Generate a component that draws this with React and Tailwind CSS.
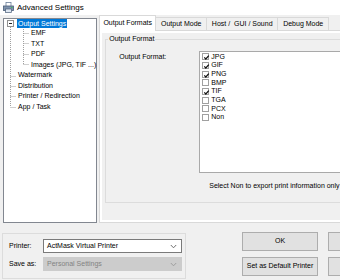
import React from 'react';

const font = { fontFamily: '"Liberation Sans", Arial, sans-serif' };

const treeRows = [
    { label: 'Output Settings', indent: 14, selected: true, first: true },
    { label: 'EMF', indent: 27 },
    { label: 'TXT', indent: 27 },
    { label: 'PDF', indent: 27 },
    { label: 'Images (JPG, TIF ...)', indent: 27 },
    { label: 'Watermark', indent: 14 },
    { label: 'Distribution', indent: 14 },
    { label: 'Printer / Redirection', indent: 14 },
    { label: 'App / Task', indent: 14 },
];

const tabs = [
    { label: 'Output Formats', w: 'w-[57px]', active: true },
    { label: 'Output Mode', w: 'w-[51px]' },
    { label: 'Host /  GUI / Sound', w: 'w-[71px]' },
    { label: 'Debug Mode', w: 'w-[51px]' },
];

const formats = [
    ['JPG', true],
    ['GIF', true],
    ['PNG', true],
    ['BMP', false],
    ['TIF', true],
    ['TGA', false],
    ['PCX', false],
    ['Non', false],
];

function PrinterIcon() {
    return (
        <svg width="11" height="11" viewBox="0 0 11 11">
            <rect x="3" y="0.5" width="5" height="4" fill="#ffffff" stroke="#6b7f99" strokeWidth="0.8" />
            <rect x="0.5" y="4" width="10" height="4.5" fill="#7f93ad" stroke="#4a5d78" strokeWidth="0.8" />
            <rect x="2.5" y="7" width="6" height="3.5" fill="#dfe8f3" stroke="#4a5d78" strokeWidth="0.7" />
            <rect x="8" y="5" width="1.5" height="1" fill="#3fbf5a" />
        </svg>
    );
}

function Check() {
    return (
        <svg width="7" height="7" viewBox="0 0 7 7" className="absolute left-0 top-0">
            <path d="M1.3 3.4 L2.8 5 L5.8 1.6" fill="none" stroke="#111" strokeWidth="1.2" />
        </svg>
    );
}

function Chevron({ color }) {
    return (
        <svg width="7" height="5" viewBox="0 0 7 5">
            <path d="M0.8 1 L3.5 3.8 L6.2 1" fill="none" stroke={color} strokeWidth="0.9" />
        </svg>
    );
}

function Tree() {
    return (
        <div className="relative mt-[3px] ml-[3px] w-[97px] h-[205px] border border-[#828790] bg-white">
            <svg className="absolute left-0 top-0" width="95" height="203">
                <g stroke="#a0a0a0" strokeWidth="1" strokeDasharray="1 1" fill="none">
                    <path d="M6.5 8 V88" />
                    <path d="M6.5 57.5 H12" />
                    <path d="M6.5 67.5 H12" />
                    <path d="M6.5 77.5 H12" />
                    <path d="M6.5 88.5 H12" />
                    <path d="M19.5 8 V45" />
                    <path d="M19.5 14.5 H25" />
                    <path d="M19.5 24.5 H25" />
                    <path d="M19.5 35.5 H25" />
                    <path d="M19.5 45.5 H25" />
                </g>
                <rect x="3.5" y="1.5" width="6" height="6" fill="#fff" stroke="#919191" strokeWidth="1" />
                <path d="M5 4.5 H8" stroke="#222" strokeWidth="1" />
            </svg>
            <div className="relative flex flex-col text-[7px] text-black" style={font}>
                {treeRows.map((r) => (
                    <div
                        key={r.label}
                        className={`${r.first ? 'h-[9px]' : 'h-[10.5px]'} flex items-center`}
                        style={{ paddingLeft: r.selected ? r.indent - 1 : r.indent }}
                    >
                        {r.selected ? (
                            <span className="bg-[#0078d7] text-white px-[1px] leading-[9px] h-[9px]">{r.label}</span>
                        ) : (
                            <span className="whitespace-nowrap">{r.label}</span>
                        )}
                    </div>
                ))}
            </div>
        </div>
    );
}

function Tabs() {
    return (
        <div className="ml-[2px] flex flex-col w-[300px] shrink-0">
            <div className="flex items-end h-[15px] relative z-10">
                {tabs.map((t) =>
                    t.active ? (
                        <div
                            key={t.label}
                            className={`${t.w} h-[16px] -mb-[1px] bg-white border border-b-0 border-[#d9d9d9] flex items-center justify-center whitespace-pre text-[7px]`}
                        >
                            {t.label}
                        </div>
                    ) : (
                        <div
                            key={t.label}
                            className={`${t.w} h-[13px] bg-[#f0f0f0] border border-l-0 border-b-0 border-[#d9d9d9] flex items-center justify-center whitespace-pre text-[7px]`}
                        >
                            {t.label}
                        </div>
                    )
                )}
            </div>
            <div className="h-[193px] border border-[#d9d9d9] bg-white p-[2px]">
                <div className="h-full bg-[#f0f0f0] pl-[3px] pt-[6px]">
                    <div className="relative h-[164px] border border-[#dcdcdc]">
                        <span className="absolute -top-[5px] left-[2px] bg-[#f0f0f0] px-[1px] text-[7px] leading-[8px]">
                            Output Format
                        </span>
                        <div className="flex pt-[11px]">
                            <div className="w-[93px] shrink-0 pl-[13px] pt-[2px] text-[7px] leading-[8px]">Output Format:</div>
                            <div className="w-[180px] shrink-0 h-[122px] border border-[#a9a9a9] bg-white pt-[0.5px] pl-[2px]">
                                {formats.map(([name, on]) => (
                                    <div key={name} className="h-[8.7px] flex items-center gap-[2px] text-[7px]">
                                        <span className="relative w-[7px] h-[7px] border border-[#a0a0a0] bg-white">
                                            {on && <Check />}
                                        </span>
                                        <span>{name}</span>
                                    </div>
                                ))}
                            </div>
                        </div>
                        <div className="pl-[103px] pt-[8px] text-[7px] whitespace-nowrap">
                            Select Non to export print information only
                        </div>
                    </div>
                </div>
            </div>
        </div>
    );
}

function Select({ value, disabled }) {
    return (
        <div
            className={`w-[139px] h-[14px] border flex items-center justify-between pl-[3px] pr-[4px] text-[7px] ${
                disabled ? 'bg-[#cccccc] border-[#cccccc] text-[#838383]' : 'bg-white border-[#7a7a7a] text-black'
            }`}
        >
            <span>{value}</span>
            <Chevron color={disabled ? '#9a9a9a' : '#606060'} />
        </div>
    );
}

function Button({ children }) {
    return (
        <div className="w-[76px] h-[19px] shrink-0 bg-[#e1e1e1] border border-[#adadad] flex items-center justify-center text-[7px]">
            {children}
        </div>
    );
}

export default function App() {
    return (
        <div className="w-[340px] h-[280px] overflow-hidden bg-[#f0f0f0] text-black" style={font}>
            <div className="h-[15px] bg-white flex items-center pl-[3px] gap-[3px]">
                <PrinterIcon />
                <span className="text-[8px]">Advanced Settings</span>
            </div>
            <div className="flex h-[208px]">
                <Tree />
                <Tabs />
            </div>
            <div className="flex">
                <div className="mt-[10px] ml-[2px] w-[184px] shrink-0 h-[46px] border border-[#dcdcdc] flex flex-col gap-[4px] pt-[5px] pl-[6px]">
                    <div className="flex items-center">
                        <span className="w-[34px] text-[7px]">Printer:</span>
                        <Select value="ActMask Virtual Printer" />
                    </div>
                    <div className="flex items-center">
                        <span className="w-[34px] text-[7px]">Save as:</span>
                        <Select value="Personal Settings" disabled />
                    </div>
                </div>
                <div className="ml-[56px] mt-[9px] flex flex-col gap-[6px]">
                    <Button>OK</Button>
                    <Button>Set as Default Printer</Button>
                </div>
                <div className="ml-[10px] mt-[9px] flex flex-col gap-[6px]">
                    <Button />
                    <Button />
                </div>
            </div>
        </div>
    );
}
